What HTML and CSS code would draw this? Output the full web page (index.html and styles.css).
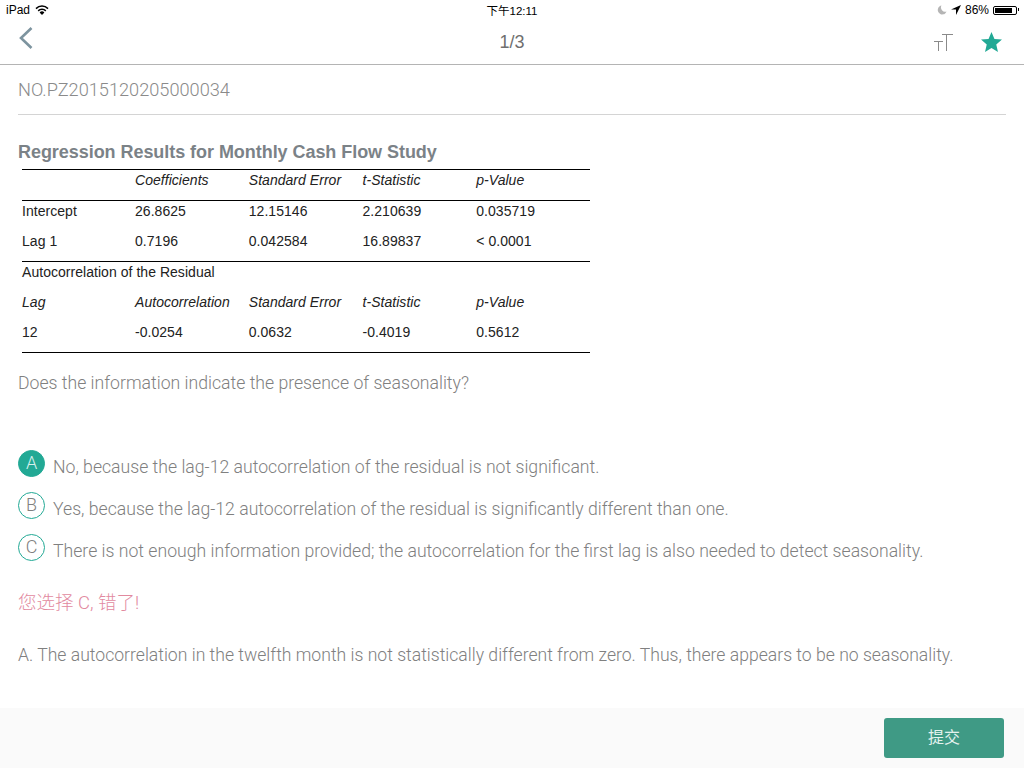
FILE: index.html
```html
<!DOCTYPE html>
<html lang="zh-CN">
<head>
    <meta charset="UTF-8">
    <title>1/3</title>
    <link rel="stylesheet" href="styles.css">
</head>
<body>
    <div class="statusBar">
        <div class="statusSide">
            <span>iPad</span>
            <svg class="wifi" width="14" height="10" viewBox="0 0 14 10"><path d="M7 10 4.600 7.400a3.400 3.400 0 0 1 4.800 0z" fill="#000"/><path d="M3.200 5.900a5.400 5.400 0 0 1 7.600 0M1 3.600a8.500 8.500 0 0 1 12 0" fill="none" stroke="#000" stroke-width="1.500"/></svg>
        </div>
        <div class="statusTime">下午12:11</div>
        <div class="statusSide statusRight">
            <svg width="10" height="10" viewBox="0 0 10 10"><path d="M4.500 .5a4.500 4.500 0 1 0 5 6 4.200 4.200 0 0 1-5-6z" fill="#b5b5b5"/></svg>
            <svg class="arrowIcon" width="10" height="10" viewBox="0 0 10 10"><path d="M10 0 0 4.600h5V10z" fill="#000"/></svg>
            <span>86%</span>
            <div class="battery"><div class="batteryFill"></div></div>
        </div>
    </div>
    <div class="navBar">
        <svg class="backIcon" width="14" height="22" viewBox="0 0 14 22"><path d="M12.500 1 2 11 12.500 21" fill="none" stroke="#7d949f" stroke-width="2.600"/></svg>
        <div class="navTitle">1/3</div>
        <svg class="fontIcon" width="20" height="20" viewBox="0 0 20 20"><path d="M0 7.500h9M4.500 7.500V17M8 .5H19M12.500 .5V17" fill="none" stroke="#8a8a8a" stroke-width="1"/></svg>
        <svg class="starIcon" width="21" height="20" viewBox="0 0 22 21"><path d="M11 0l3.100 7.300 7.900.7-6 5.200 1.800 7.800L11 16.900 4.200 21 6 13.200 0 8l7.900-.7z" fill="#22a995"/></svg>
    </div>
    <div class="content">
        <div class="questionNo">NO.PZ2015120205000034</div>
        <h3 class="tableTitle">Regression Results for Monthly Cash Flow Study</h3>
        <table class="results">
            <tr class="headRow">
                <td></td><td>Coefficients</td><td>Standard Error</td><td>t-Statistic</td><td>p-Value</td>
            </tr>
            <tr>
                <td>Intercept</td><td>26.8625</td><td>12.15146</td><td>2.210639</td><td>0.035719</td>
            </tr>
            <tr class="endRow">
                <td>Lag 1</td><td>0.7196</td><td>0.042584</td><td>16.89837</td><td>&lt; 0.0001</td>
            </tr>
            <tr>
                <td colspan="5">Autocorrelation of the Residual</td>
            </tr>
            <tr class="italicRow">
                <td>Lag</td><td>Autocorrelation</td><td>Standard Error</td><td>t-Statistic</td><td>p-Value</td>
            </tr>
            <tr class="endRow">
                <td>12</td><td>-0.0254</td><td>0.0632</td><td>-0.4019</td><td>0.5612</td>
            </tr>
        </table>
        <p class="prompt">Does the information indicate the presence of seasonality?</p>
        <div class="options">
            <div class="option">
                <span class="badge selected">A</span>
                <span class="optionText">No, because the lag-12 autocorrelation of the residual is not significant.</span>
            </div>
            <div class="option">
                <span class="badge">B</span>
                <span class="optionText">Yes, because the lag-12 autocorrelation of the residual is significantly different than one.</span>
            </div>
            <div class="option">
                <span class="badge">C</span>
                <span class="optionText">There is not enough information provided; the autocorrelation for the first lag is also needed to detect seasonality.</span>
            </div>
        </div>
        <p class="wrongNote">您选择 C, 错了!</p>
        <p class="explain">A. The autocorrelation in the twelfth month is not statistically different from zero. Thus, there appears to be no seasonality.</p>
    </div>
    <div class="footer">
        <button class="submitBtn">提交</button>
    </div>
</body>
</html>
```

FILE: styles.css
```css
body {
    margin: 0;
    width: 1024px;
    height: 768px;
    overflow: hidden;
    display: flex;
    flex-direction: column;
    background: #fff;
    color: #808080;
    font-family: Roboto, "Noto Sans CJK SC", sans-serif;
    font-weight: 300;
}
.statusBar {
    height: 20px;
    padding: 0 6px;
    position: relative;
    display: flex;
    justify-content: space-between;
    align-items: center;
    font-family: "Liberation Sans", "Noto Sans CJK SC", sans-serif;
    font-weight: 400;
    font-size: 12px;
    color: #000;
}
.statusSide {
    display: flex;
    align-items: center;
    gap: 5px;
}
.statusRight {
    gap: 4px;
    padding-right: 1px;
}
.statusTime {
    position: absolute;
    left: 0;
    right: 0;
    text-align: center;
    font-size: 11.5px;
}
.battery {
    position: relative;
    width: 20px;
    height: 5px;
    padding: 1px;
    border: 1px solid #000;
    border-radius: 2px;
}
.battery::after {
    content: "";
    position: absolute;
    right: -3px;
    top: 1px;
    width: 1px;
    height: 3px;
    background: #000;
}
.batteryFill {
    width: 86%;
    height: 100%;
    background: #000;
}
.navBar {
    height: 44px;
    position: relative;
    display: flex;
    align-items: center;
    border-bottom: 1px solid #b4b4b4;
}
.navTitle {
    flex: 1;
    text-align: center;
    font-family: "Liberation Sans", sans-serif;
    font-size: 18px;
    font-weight: 400;
    color: #6f6f6f;
}
.backIcon {
    position: absolute;
    left: 19px;
    top: 7px;
}
.fontIcon {
    position: absolute;
    left: 934px;
    top: 14px;
}
.starIcon {
    position: absolute;
    left: 981px;
    top: 12px;
}
.content {
    flex: 1;
    padding: 0 18px;
}
.questionNo {
    height: 49px;
    line-height: 50px;
    font-size: 18.2px;
    color: #8a8a8a;
    border-bottom: 1px solid #d4d4d4;
}
.tableTitle {
    margin: 26px 0 6px;
    height: 22px;
    line-height: 22px;
    font-family: "Liberation Sans", sans-serif;
    font-size: 18px;
    font-weight: bold;
    letter-spacing: -0.05px;
    color: #7b8287;
}
.results {
    margin-left: 4px;
    width: 568px;
    table-layout: fixed;
    border-collapse: collapse;
    border-top: 1px solid #000;
    border-bottom: 1px solid #000;
    font-family: "Liberation Sans", sans-serif;
    font-weight: 400;
    font-size: 14px;
    letter-spacing: 0.04px;
    color: #222;
}
.results td {
    height: 28px;
    padding: 2px 0 0;
    vertical-align: top;
}
.results td:first-child {
    width: 113px;
}
.headRow td {
    border-bottom: 1px solid #000;
    font-style: italic;
}
.italicRow td {
    font-style: italic;
}
.endRow td {
    border-bottom: 1px solid #000;
}
.prompt {
    margin: 19px 0 0;
    font-size: 17.65px;
    line-height: 22px;
}
.options {
    margin-top: 56px;
    display: flex;
    flex-direction: column;
    gap: 14px;
}
.option {
    height: 28px;
    display: flex;
    gap: 8px;
}
.badge {
    width: 25px;
    height: 25px;
    border: 1px solid #22a995;
    border-radius: 50%;
    text-align: center;
    line-height: 24px;
    font-size: 18px;
    color: #808080;
}
.badge.selected {
    background: #22a995;
    color: #d6f0ec;
}
.optionText {
    font-size: 17.65px;
    line-height: 22px;
    padding-top: 6px;
}
.wrongNote {
    margin: 29px 0 0;
    font-size: 18.5px;
    line-height: 24px;
    color: #e28a9f;
}
.explain {
    margin: 28px 0 0;
    font-size: 17.6px;
    line-height: 24px;
}
.footer {
    height: 60px;
    background: #fafafa;
    display: flex;
    justify-content: flex-end;
    align-items: center;
    padding-right: 20px;
}
.submitBtn {
    width: 120px;
    height: 40px;
    padding: 0 0 5px;
    border: none;
    border-radius: 3px;
    background: #3f9a85;
    color: #e4f2ee;
    font-size: 16px;
    font-family: inherit;
}
```
